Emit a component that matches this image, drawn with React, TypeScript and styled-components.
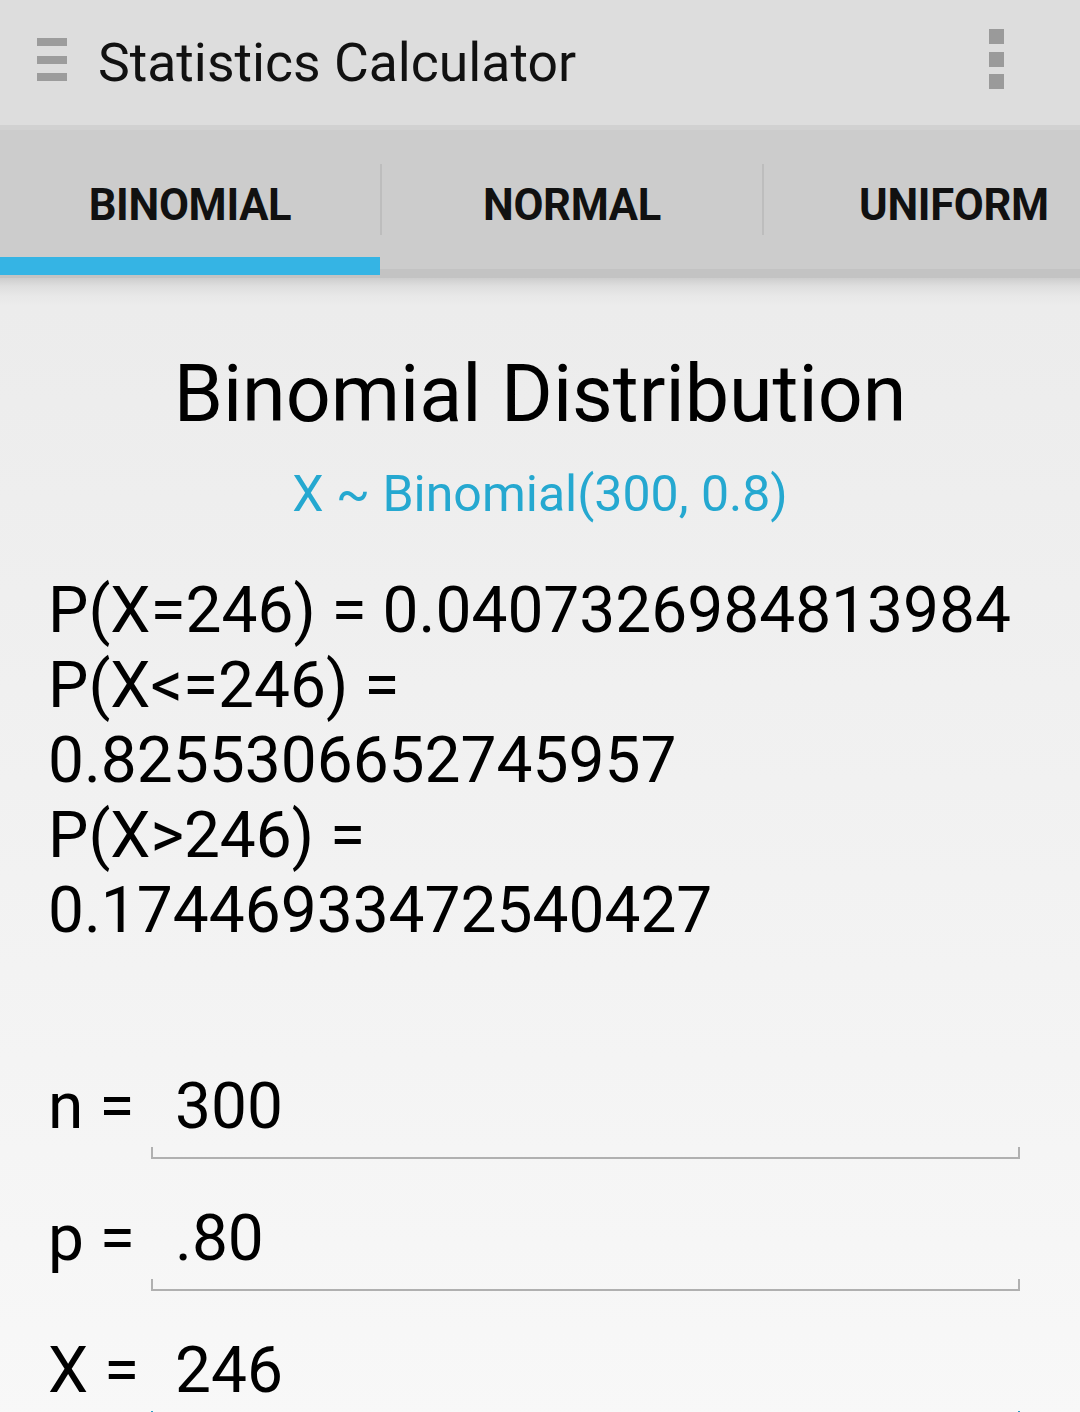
import React from "react";
import styled, { createGlobalStyle } from "styled-components";

const GlobalStyle = createGlobalStyle`
  html, body {
    margin: 0;
    padding: 0;
    width: 1080px;
    height: 1412px;
    overflow: hidden;
    font-family: Roboto, "Noto Sans", "Liberation Sans", sans-serif;
    color: #000;
    background: #f5f5f5;
  }
  * { box-sizing: border-box; }
`;

const Screen = styled.div`
  width: 1080px;
  height: 1412px;
  display: flex;
  flex-direction: column;
  overflow: hidden;
`;

const ActionBar = styled.header`
  height: 125px;
  flex: none;
  background: #dddddd;
  display: flex;
  align-items: center;
  padding-left: 37px;
  padding-right: 76px;
`;

const Hamburger = styled.div`
  display: flex;
  flex-direction: column;
  gap: 9.5px;
  margin-bottom: 6px;
`;

const Bar = styled.span`
  display: block;
  width: 30px;
  height: 8px;
  background: #9c9c9c;
`;

const AppTitle = styled.h1`
  margin: 0 0 0 31px;
  font-size: 53.5px;
  font-weight: 400;
  color: #111;
  flex: 1;
  white-space: nowrap;
`;

const Overflow = styled.div`
  display: flex;
  flex-direction: column;
  gap: 7.5px;
  margin-bottom: 7px;
`;

const Dot = styled.span`
  display: block;
  width: 15px;
  height: 15px;
  background: #9a9a9a;
`;

const BarSeam = styled.div`
  height: 5px;
  flex: none;
  background: #d1d1d1;
`;

const TabBar = styled.nav`
  flex: none;
  background: #cccccc;
  display: flex;
  flex-direction: column;
  overflow: hidden;
`;

const TabRow = styled.div`
  display: flex;
  align-items: center;
  height: 139px;
  width: 1146px;
`;

const Tab = styled.div<{ $active?: boolean }>`
  position: relative;
  width: 380px;
  height: 100%;
  flex: none;
  display: flex;
  align-items: center;
  justify-content: center;
  padding-top: 11px;
  font-size: 43.5px;
  font-weight: 700;
  color: #111;
  letter-spacing: -0.3px;

  &::after {
    content: "";
    display: ${(p) => (p.$active ? "block" : "none")};
    position: absolute;
    left: 0;
    right: 0;
    top: 127px;
    height: 18px;
    background: #35b4e4;
    z-index: 1;
  }
`;

const TabDivider = styled.span`
  width: 2px;
  height: 71px;
  flex: none;
  background: #bdbdbd;
`;

const TabBaseLine = styled.div`
  height: 9px;
  background: #c3c3c3;
`;

const Content = styled.main`
  flex: 1;
  background: linear-gradient(
    to bottom,
    #cdcdcd 0px,
    #dedede 8px,
    #e8e8e8 18px,
    #ececec 28px,
    #f2f2f2 600px,
    #f8f8f8 100%
  );
  display: flex;
  flex-direction: column;
  padding-top: 70px;
`;

const Heading = styled.h2`
  margin: 0;
  text-align: center;
  font-size: 79px;
  font-weight: 400;
  color: #000;
  line-height: normal;
`;

const Subheading = styled.div`
  margin-top: 25px;
  text-align: center;
  font-size: 50px;
  color: #25a8d0;
  line-height: normal;
`;

const Results = styled.div`
  margin-top: 50px;
  padding-left: 48px;
  display: flex;
  flex-direction: column;
`;

const ResultLine = styled.div`
  font-size: 64px;
  line-height: 75px;
  color: #000;
  white-space: nowrap;
`;

const Inputs = styled.div`
  margin-top: 121px;
  padding-left: 48px;
  padding-right: 60px;
  display: flex;
  flex-direction: column;
  gap: 42px;
`;

const FieldRow = styled.div`
  display: flex;
  align-items: flex-start;
`;

const FieldLabel = styled.label`
  width: 103px;
  flex: none;
  font-size: 64px;
  line-height: 75px;
  color: #000;
  white-space: nowrap;
`;

const Field = styled.div`
  flex: 1;
  display: flex;
  flex-direction: column;
`;

const FieldValue = styled.div`
  font-size: 64px;
  line-height: 75px;
  padding-left: 24px;
  color: #000;
`;

const FieldLine = styled.div<{ $focused?: boolean }>`
  margin-top: 3px;
  height: 12px;
  border: 2px solid ${(p) => (p.$focused ? "#2a9ec6" : "#b0b0b0")};
  border-top: none;
`;

const results = [
  "P(X=246) = 0.0407326984813984",
  "P(X<=246) =",
  "0.8255306652745957",
  "P(X>246) =",
  "0.17446933472540427",
];

const fields = [
  { label: "n =", value: "300" },
  { label: "p =", value: ".80" },
  { label: "X =", value: "246", focused: true },
];

export default function App() {
  return (
    <Screen>
      <GlobalStyle />
      <ActionBar>
        <Hamburger>
          <Bar />
          <Bar />
          <Bar />
        </Hamburger>
        <AppTitle>Statistics Calculator</AppTitle>
        <Overflow>
          <Dot />
          <Dot />
          <Dot />
        </Overflow>
      </ActionBar>
      <BarSeam />
      <TabBar>
        <TabRow>
          <Tab $active>BINOMIAL</Tab>
          <TabDivider />
          <Tab>NORMAL</Tab>
          <TabDivider />
          <Tab>UNIFORM</Tab>
        </TabRow>
        <TabBaseLine />
      </TabBar>
      <Content>
        <Heading>Binomial Distribution</Heading>
        <Subheading>X ~ Binomial(300, 0.8)</Subheading>
        <Results>
          {results.map((r, i) => (
            <ResultLine key={i}>{r}</ResultLine>
          ))}
        </Results>
        <Inputs>
          {fields.map((f) => (
            <FieldRow key={f.label}>
              <FieldLabel>{f.label}</FieldLabel>
              <Field>
                <FieldValue>{f.value}</FieldValue>
                <FieldLine $focused={f.focused} />
              </Field>
            </FieldRow>
          ))}
        </Inputs>
      </Content>
    </Screen>
  );
}
